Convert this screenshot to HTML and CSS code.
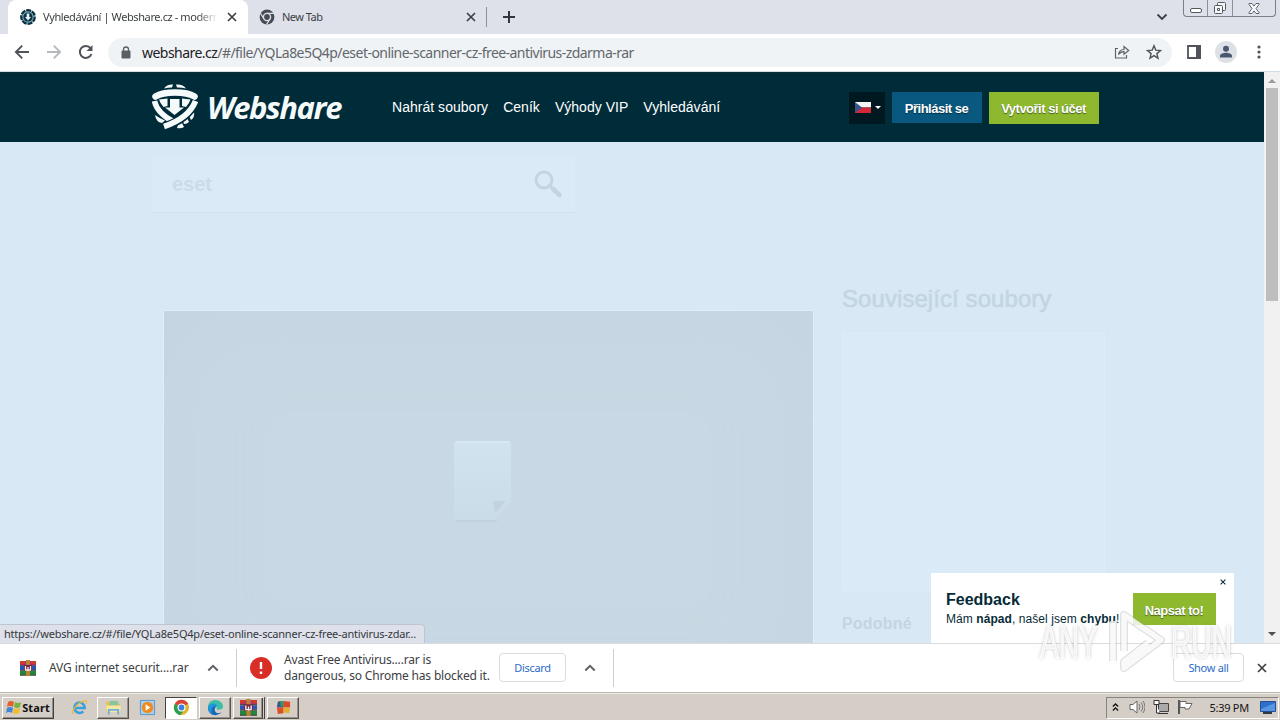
FILE: index.html
```html
<!DOCTYPE html>
<html lang="cs">
<head>
  <meta charset="UTF-8">
  <title>Vyhledávání | Webshare.cz</title>
  <link rel="stylesheet" href="styles.css">
</head>
<body>

<!-- shared icons -->
<svg class="defs" width="0" height="0">
  <symbol id="chrome-mono" viewBox="0 0 16 16">
    <circle cx="8" cy="8" r="7.4" fill="#474b52"/>
    <circle cx="8" cy="8" r="3.6" fill="#474b52" stroke="#dee1e9" stroke-width="1.4"/>
    <path d="M8 4.4h7M4.9 9.8 1.4 4.2M11.1 9.8 7.6 15.4" stroke="#dee1e9" stroke-width="1.2"/>
  </symbol>
  <symbol id="winrar" viewBox="0 0 16 16">
    <path fill="#b32b7d" d="M0 1h16v4H0z"/>
    <path fill="#2a53b5" d="M0 6h16v4H0z"/>
    <path fill="#23863a" d="M0 11h16v4H0z"/>
    <path fill="#cf3b2b" d="M0 1h5v3H0zM11 1h5v3h-5z"/>
    <path stroke="#1d1a20" stroke-width=".8" d="M0 5.4h16M0 10.4h16M0 15.3h16"/>
    <path fill="#b98235" d="M6 0h4v16H6z"/>
    <path fill="#732440" d="M4 5h8v6H4z"/>
    <path fill="none" stroke="#f4eee8" stroke-width="1.3" d="M5.5 6v4h5V6M8 7v4"/>
  </symbol>
  <symbol id="caret-up" viewBox="0 0 12 8">
    <path fill="none" stroke="#5f6368" stroke-width="2" d="M1.3 6.500 6 1.800l4.700 4.700"/>
  </symbol>
  <symbol id="cross" viewBox="0 0 10 10">
    <path fill="none" stroke="currentColor" stroke-width="1.7" d="m1 1 8 8M9 1 1 9"/>
  </symbol>
</svg>

<div class="tabstrip">
  <div class="tab active">
    <svg class="favicon" viewBox="0 0 16 16">
      <circle cx="8" cy="8" r="6.8" fill="#78a7b7" stroke="#0b2f40" stroke-width="2.2" stroke-dasharray="5 1"/>
      <circle cx="8" cy="8" r="4.6" fill="#0b3346"/>
      <path fill="#e8f6fa" d="M6.700 4.500h2.600V8H11l-3 3.400L5 8h1.700z"/>
    </svg>
    <span class="tab-title fade">Vyhledávání | Webshare.cz - modern</span>
    <svg class="tab-close"><use href="#cross"/></svg>
  </div>
  <div class="tab second-tab">
    <svg class="favicon"><use href="#chrome-mono"/></svg>
    <span class="tab-title">New Tab</span>
    <svg class="tab-close"><use href="#cross"/></svg>
  </div>
  <span class="tab-sep"></span>
  <svg class="plus" viewBox="0 0 12 12"><path d="M6 0v12M0 6h12" stroke="#33373c" stroke-width="2"/></svg>
  <svg class="tab-search" viewBox="0 0 12 8"><path d="m1.500 1.500 4.500 4.500 4.500-4.500" fill="none" stroke="#3c4043" stroke-width="1.8"/></svg>
  <div class="win-buttons">
    <span class="win-btn"><svg width="12" height="5"><rect x=".5" y=".5" width="11" height="4" rx="1.5" fill="#fff" stroke="#54585f"/></svg></span>
    <span class="win-btn"><svg width="14" height="14"><g fill="#f5f6f8" stroke="#54585f"><rect x="4.500" y="1.500" width="8" height="8" rx="1"/><rect x="1.500" y="4.500" width="8" height="8" rx="1"/><path d="M4.500 7.500h2v2h-2z"/></g></svg></span>
    <span class="win-btn wide"><svg width="12" height="11" viewBox="0 0 12 11"><path d="M1 .5h3l2 2.600L8 .5h3v1L8 5.500l3 4v1H8L6 7.900l-2 2.600H1v-1l3-4-3-4z" fill="#f8f8fa" stroke="#54585f" stroke-width=".9"/></svg></span>
  </div>
</div>

<div class="toolbar">
  <svg class="nav" viewBox="0 0 16 16"><path d="M15 8H2M8.200 1.700 1.900 8l6.300 6.300" fill="none" stroke="#505459" stroke-width="1.900"/></svg>
  <svg class="nav" viewBox="0 0 16 16"><path d="M1 8h13M7.800 1.700 14.100 8l-6.300 6.300" fill="none" stroke="#b7babd" stroke-width="1.900"/></svg>
  <svg class="nav" viewBox="0 0 16 16"><path d="M13.500 10A6 6 0 1 1 12.600 4.200" fill="none" stroke="#505459" stroke-width="2"/><path d="M14.500 1v6h-6z" fill="#505459"/></svg>
  <div class="omnibox">
    <svg class="lock" viewBox="0 0 10 13"><rect x=".5" y="4.500" width="9" height="8" rx="1" fill="#5b5f64"/><path d="M2.500 5V3.500a2.500 2.500 0 0 1 5 0V5" fill="none" stroke="#5b5f64" stroke-width="1.300"/></svg>
    <span class="url"><b>webshare.cz</b>/#/file/YQLa8e5Q4p/eset-online-scanner-cz-free-antivirus-zdarma-rar</span>
    <svg class="share" viewBox="0 0 16 14"><path d="M4 3.500H1.500v9.500h11V10M4.500 9.500C5 6 7.500 4.600 10 4.500V1.500L14.700 5.500 10 9.300V6.700C8 6.700 6 7.500 4.500 9.500z" fill="none" stroke="#5f6368" stroke-width="1.200"/></svg>
    <svg class="star" viewBox="0 0 16 16"><path d="m8 1.700 1.800 4.400 4.700.4-3.600 3.100 1.100 4.600L8 11.700l-4 2.500 1.100-4.600L1.500 6.500l4.700-.4z" fill="none" stroke="#505459" stroke-width="1.400"/></svg>
  </div>
  <svg class="panel" viewBox="0 0 14 14"><path d="M1 1h12v12H1z" fill="#fff" stroke="#505459" stroke-width="1.800"/><path d="M9 0h5v14H9z" fill="#505459"/></svg>
  <svg class="avatar" viewBox="0 0 22 22"><circle cx="11" cy="11" r="11" fill="#dde1e6"/><circle cx="11" cy="7.800" r="3" fill="#4b5872"/><path d="M5 16.500v-1.700c0-2 3.500-3 6-3s6 1 6 3v1.700z" fill="#4b5872"/></svg>
  <svg class="dots" viewBox="0 0 4 14"><g fill="#505459"><circle cx="2" cy="2" r="1.600"/><circle cx="2" cy="7" r="1.600"/><circle cx="2" cy="12" r="1.600"/></g></svg>
</div>

<div class="viewport">
  <div class="site">
    <header class="site-header">
      <div class="logo">
        <svg class="logo-mark" viewBox="0 0 46 46">
          <g fill="#f5fafb">
            <path d="M12 4.500Q15 0 21 .5L20 3.500Q16 3.500 12 4.500zM24 .5q7-.5 10 4-5-1.300-9-1z"/>
            <path d="M3 31q1 7 7 8l3-2.500Q7 34 3 31zM37 32l5-4q1 5-3 8zM31 37l4-3 2 4q-2 2-5 2zM26 41l4-2 2 4q-3 2-7 1z"/>
            <path d="M18 15h9.500v8.500H32L22.500 31 13 23.500h5z"/>
            <path d="M7 15.500 15.500 14.500V22l-4 1Q8 19 7 15.500zM30 14.500l8.500 1Q37.500 19 34 23l-4-1z"/>
          </g>
          <path d="M3.500 12.500Q10 8.500 23 8.500t19.500 4" fill="none" stroke="#f5fafb" stroke-width="6.500" stroke-linecap="round"/>
          <path d="M3 18Q6 29 22 37" fill="none" stroke="#002b39" stroke-width="8"/>
          <path d="M2.500 17Q5 29 22 38" fill="none" stroke="#f5fafb" stroke-width="5.500"/>
          <path d="M43 18Q37 34 14 42" fill="none" stroke="#002b39" stroke-width="8.500"/>
          <path d="M43.500 17Q37 34 12 42.500" fill="none" stroke="#f5fafb" stroke-width="5.800"/>
        </svg>
        <span class="logo-text">Webshare</span>
      </div>
      <nav class="menu">
        <a>Nahrát soubory</a>
        <a>Ceník</a>
        <a>Výhody VIP</a>
        <a>Vyhledávání</a>
      </nav>
      <div class="account">
        <span class="lang">
          <svg width="16" height="11"><path fill="#f5f5f5" d="M0 0h16v5.500H0z"/><path fill="#d32835" d="M0 5.500h16V11H0z"/><path fill="#37558d" d="m0 0 7 5.500L0 11z"/></svg>
          <i class="arrow"></i>
        </span>
        <a class="btn login">Přihlásit se</a>
        <a class="btn green">Vytvořit si účet</a>
      </div>
    </header>

    <main class="content">
      <div class="search">
        <span>eset</span>
        <svg width="30" height="30" viewBox="0 0 30 30"><circle cx="11" cy="11" r="8" fill="none" stroke="#c3d5e1" stroke-width="3"/><path d="m17 17 3 3" stroke="#c3d5e1" stroke-width="3"/><path d="m20 20 6.500 6" stroke="#c3d5e1" stroke-width="4.500" stroke-linecap="round"/></svg>
      </div>
      <div class="columns">
        <div class="preview">
          <svg width="62" height="84" viewBox="0 0 62 84">
            <defs><linearGradient id="paper" x2="0" y2="1"><stop stop-color="#d2e3f0"/><stop offset="1" stop-color="#cbdce9"/></linearGradient></defs>
            <path d="M4 81h41" stroke="#c1d2df" stroke-width="2"/>
            <path d="M5 1h52q2 0 2 2v59L43 80H5q-3 0-3-3V3q0-2 3-2z" fill="url(#paper)"/>
            <path d="M41 61h13L43 73z" fill="#c2d3e0"/>
            <path d="M4 2h53" stroke="#d7e8f4" stroke-width="2"/>
          </svg>
        </div>
        <aside class="related">
          <h2>Související soubory</h2>
          <div class="related-box"></div>
          <h3>Podobné</h3>
        </aside>
      </div>
    </main>

    <div class="feedback">
      <div class="feedback-text">
        <strong>Feedback</strong>
        <p>Mám <b>nápad</b>, našel jsem <b>chybu</b>!</p>
      </div>
      <a class="btn green">Napsat to!</a>
      <svg class="feedback-close" viewBox="0 0 10 10"><use href="#cross"/></svg>
    </div>
    <div class="status">https://webshare.cz/#/file/YQLa8e5Q4p/eset-online-scanner-cz-free-antivirus-zdar...</div>
  </div>
  <div class="scrollbar">
    <i class="sb-up"></i>
    <span class="thumb"></span>
    <i class="sb-down"></i>
  </div>
</div>

<div class="shelf">
  <div class="download first">
    <svg class="rar"><use href="#winrar"/></svg>
    <span class="file">AVG internet securit....rar</span>
    <svg class="caret"><use href="#caret-up"/></svg>
  </div>
  <div class="download second">
    <svg class="alert" viewBox="0 0 22 22"><circle cx="11" cy="11" r="11" fill="#d92d27"/><path d="M11 5v7M11 14.500V17" stroke="#fff" stroke-width="2.400"/></svg>
    <p class="warning">Avast Free Antivirus....rar is<br>dangerous, so Chrome has blocked it.</p>
    <a class="outline discard">Discard</a>
    <svg class="caret"><use href="#caret-up"/></svg>
  </div>
  <a class="outline show-all">Show all</a>
  <svg class="shelf-close"><use href="#cross"/></svg>
</div>

<div class="taskbar">
  <div class="start">
    <svg width="16" height="15" viewBox="0 0 16 15"><path d="M2 2q3-2 6 0L7 7Q4 5 1 7z" fill="#e6602b"/><path d="M9 2q3 2 6 0l-1 5q-3 2-6 0z" fill="#73b53e"/><path d="M1 8q3-2 6 0l-1 5q-3-2-6 0z" fill="#3f86d4"/><path d="M8 8q3 2 6 0l-1 5q-3 2-6 0z" fill="#f3bd29"/></svg>
    <span>Start</span>
  </div>
  <span class="task flat">
    <svg viewBox="0 0 18 18"><path d="M4 9.500h10.500A5.500 5.500 0 1 0 13 13" fill="none" stroke="#3a9fdc" stroke-width="2.700"/><path d="M3 15C-2 16 6 4 14 2c3-1 3 1 2 3" fill="none" stroke="#e9b93b" stroke-width="1.300"/></svg>
  </span>
  <span class="task">
    <svg viewBox="0 0 18 18"><path d="M1 3h6l1 2h8v9H1z" fill="#e3c15c"/><path d="M5 2h9v5H5z" fill="#8bc59c"/><path d="M1 7h16l-1 7H2z" fill="#f8e6a3"/><path d="M4 16.500v-5h10v5" fill="none" stroke="#6fb0da" stroke-width="2"/></svg>
  </span>
  <span class="task flat">
    <svg viewBox="0 0 18 18"><path d="M1.500 1.500h15v15h-15z" fill="#a8cee9" stroke="#4f98cf"/><circle cx="9" cy="9" r="6" fill="#f08a1d"/><path d="m7 5.500 5 3.500-5 3.500z" fill="#fff"/></svg>
  </span>
  <span class="task pressed">
    <svg viewBox="0 0 18 18"><circle cx="9" cy="9" r="8" fill="#e0b629"/><path d="M9 9 2 5a8 8 0 0 1 14 0z" fill="#da4235"/><path d="M9 9 2 5a8 8 0 0 0 6 12l4-6z" fill="#2e9d4d"/><circle cx="9" cy="9" r="3.700" fill="#3f7fe0" stroke="#fff" stroke-width="1.300"/></svg>
  </span>
  <span class="task">
    <svg viewBox="0 0 18 18"><path d="M1 9C1 3 5 1 9 1s8 3 8 7c0 3-4 4-7 3 1-2 1-4-3-5-3 0-5 1-6 3z" fill="#3cbfa6"/><path d="M1 9c2-4 8-4 9-1-3 2-2 6 1 7 2 0 4 0 5-2-3 6-15 6-15-4z" fill="#1668b8"/><path d="M1 9c1-5 9-6 10-1-5-2-8 3-5 8-3-1-5-4-5-7z" fill="#1f95dc"/></svg>
  </span>
  <span class="task double"><svg viewBox="0 0 16 16"><use href="#winrar"/></svg></span>
  <span class="task">
    <svg viewBox="0 0 18 18"><path d="M3 3q3-2 6 0v6H2z" fill="#38558f"/><path d="M9 2l7 1v6H9z" fill="#da4a29"/><path d="M2 9h7v6l-6 1z" fill="#db5127"/><path d="M9 9h7l-1 6-6-1z" fill="#e5ae32"/><path d="M5 2h4v6H6z" fill="#36945f"/></svg>
  </span>
  <div class="tray">
    <svg class="tray-up" viewBox="0 0 8 10"><path d="m1 4.500 3-3 3 3M1 9l3-3 3 3" fill="none" stroke="#111" stroke-width="1.500"/></svg>
    <svg class="sound" viewBox="0 0 16 16"><path d="M1 5.500h3L8 2v12l-4-3.500H1z" fill="#fff" stroke="#666"/><path d="M10 5q2 3 0 6M12 3.500q3.500 4.500 0 9M14 2q4 6 0 12" fill="none" stroke="#777"/></svg>
    <svg class="net" viewBox="0 0 16 16"><path d="M5.500 4.500h10v8h-10z" fill="#aaa" stroke="#444"/><path d="M5 14.500h10" stroke="#333"/><path d="M1 1.500h5v4H1zM3.500 6v8H7" fill="#fff" stroke="#333"/></svg>
    <svg class="flag" viewBox="0 0 16 16"><path d="M2 1v14" stroke="#555" stroke-width="2"/><path d="M3 2.500h6v2h6l-3 5.500H8V8.500H3z" fill="#fff" stroke="#666"/></svg>
    <span class="clock">5:39 PM</span>
    <svg class="desk" viewBox="0 0 16 13"><path d="M.5.500h15v10H.5z" fill="#2d6fc9" stroke="#234e91"/><path d="M1 8 15 2v8H1z" fill="#5896e4"/><path d="M3 12h9" stroke="#2e3947" stroke-width="2"/></svg>
  </div>
</div>

<div class="watermark">
  <span>ANY</span>
  <svg width="62" height="66" viewBox="0 0 62 66"><g fill="none" stroke-linejoin="round"><path d="M7 12v40M18 42V6l37 25-37 28v-6l24-19" stroke="#999" stroke-opacity=".3" stroke-width="8"/><path d="M7 12v40M18 42V6l37 25-37 28v-6l24-19" stroke="#fff" stroke-opacity=".8" stroke-width="5.500"/></g></svg>
  <span>RUN</span>
</div>

</body>
</html>
```
FILE: styles.css
```css
* {
  box-sizing: border-box;
}
body {
  margin: 0;
  width: 1280px;
  height: 720px;
  overflow: hidden;
  display: flex;
  flex-direction: column;
  position: relative;
  font-family: "Noto Sans", sans-serif;
  font-size: 11px;
  color: #3c4043;
  background: #fff;
}
svg {
  display: block;
  flex: none;
}
.defs {
  position: absolute;
}
span, a {
  white-space: nowrap;
}

/* tabs */
.tabstrip {
  height: 34px;
  flex: none;
  display: flex;
  align-items: center;
  background: #dee1e9;
}
.tab {
  width: 239px;
  height: 34px;
  display: flex;
  align-items: center;
  padding: 0 10px 0 12px;
}
.tab.active {
  margin-left: 8px;
  width: 240px;
  background: #fff;
  border-radius: 8px 8px 0 0;
}
.second-tab {
  width: 238px;
  padding-left: 11px;
  padding-right: 9px;
}
.favicon {
  width: 16px;
  height: 16px;
}
.tab-title {
  flex: 1;
  margin-left: 7px;
  padding-bottom: 1px;
  overflow: hidden;
  font-size: 11px;
  letter-spacing: -0.5px;
}
.fade {
  margin-right: 9px;
  letter-spacing: -0.4px;
  -webkit-mask-image: linear-gradient(to right, #000 88%, transparent);
  mask-image: linear-gradient(to right, #000 88%, transparent);
}
.tab-close {
  width: 10px;
  height: 10px;
  margin-right: 1px;
}
.tab-sep {
  width: 1px;
  height: 20px;
  background: #8d929b;
}
.plus {
  width: 12px;
  height: 12px;
  margin-left: 16px;
}
.tab-search {
  width: 12px;
  height: 8px;
  margin-left: auto;
}
.win-buttons {
  display: flex;
  align-self: flex-start;
  height: 17px;
  margin: 0 4px 0 15px;
  border: 1px solid #7b7f87;
  border-top: 0;
  border-radius: 0 0 4px 4px;
}
.win-btn {
  width: 25px;
  display: flex;
  align-items: center;
  justify-content: center;
  border-right: 1px solid #8d9199;
}
.win-btn:first-child {
  width: 24px;
  padding-top: 4px;
}
.win-btn.wide {
  width: 42px;
  border: 0;
}

/* toolbar */
.toolbar {
  height: 38px;
  flex: none;
  display: flex;
  align-items: center;
  padding: 0 19px 1px 14px;
  border-bottom: 1px solid #d3dce2;
}
.nav {
  width: 16px;
  height: 16px;
  margin-right: 16px;
}
.omnibox {
  width: 1064px;
  height: 29px;
  margin-left: -2px;
  display: flex;
  align-items: center;
  border-radius: 15px;
  background: #f0f3f5;
  padding: 0 10px 0 13px;
}
.lock {
  width: 10px;
  height: 13px;
}
.url {
  margin-left: 11px;
  font-size: 14px;
  letter-spacing: -0.54px;
  color: #62676c;
}
.url b {
  font-weight: normal;
  color: #202124;
}
.share {
  width: 16px;
  height: 14px;
  margin-left: auto;
}
.star {
  width: 16px;
  height: 16px;
  margin-left: 16px;
}
.panel {
  width: 14px;
  height: 14px;
  margin-left: 15px;
}
.avatar {
  width: 22px;
  height: 22px;
  margin-left: 14px;
}
.dots {
  width: 4px;
  height: 14px;
  margin-left: auto;
}

/* page */
.viewport {
  height: 571px;
  flex: none;
  display: flex;
}
.site {
  width: 1264px;
  position: relative;
  overflow: hidden;
  background: #d8e9f5;
  font-family: "Liberation Sans", Arial, sans-serif;
}
.site-header {
  height: 70px;
  padding: 0 165px 0 152px;
  display: flex;
  align-items: center;
  background: #002b39;
  border-top: 1px solid #092e35;
}
.logo {
  width: 240px;
  padding-bottom: 1px;
  display: flex;
  align-items: center;
}
.logo-mark {
  width: 46px;
  height: 46px;
}
.logo-text {
  margin-left: 9px;
  font: italic bold 31px/40px "Open Sans", sans-serif;
  letter-spacing: -1.45px;
  color: #f5fafb;
}
.menu {
  display: flex;
  gap: 15px;
  padding-bottom: 1px;
  font-size: 14px;
  letter-spacing: 0.03px;
  color: #fff;
}
.account {
  margin-left: auto;
  display: flex;
}
.lang {
  width: 36px;
  height: 32px;
  margin-right: 7px;
  display: flex;
  align-items: center;
  justify-content: center;
  gap: 4px;
  padding-left: 1px;
  background: #001820;
}
.arrow {
  border: 3px solid transparent;
  border-top-color: #fff;
  border-bottom: 0;
}
.btn {
  height: 32px;
  display: flex;
  align-items: center;
  justify-content: center;
  padding: 1px 1px 0 0;
  font-size: 13px;
  font-weight: bold;
  letter-spacing: -0.5px;
  color: #fff;
  text-shadow: 0 1px 1px rgba(0,0,0,0.5);
}
.login {
  width: 90px;
  height: 31px;
  margin-right: 7px;
  padding-top: 2px;
  background: #085880;
}
.green {
  width: 110px;
  background: #8eb92f;
}
.content {
  padding: 13px 0 0 152px;
}
.search {
  width: 423px;
  height: 58px;
  padding: 1px 12px 0 20px;
  display: flex;
  align-items: center;
  justify-content: space-between;
  background: #dbeaf7;
  border-bottom: 1px solid #d0e2ef;
  font-size: 20px;
  font-weight: bold;
  color: #cbdce8;
}
.columns {
  display: flex;
  align-items: flex-start;
  gap: 28px;
  padding: 71px 0 0 11px;
}
.preview {
  width: 651px;
  height: 400px;
  margin-top: 26px;
  padding: 129px 0 0 288px;
  border: 1px solid #dfeefa;
  background: #c8d8e4;
  box-shadow: inset 0 0 100px #c4d4e0;
}
.related {
  width: 263px;
}
.related h2 {
  margin: 0;
  font-size: 24px;
  line-height: 30px;
  letter-spacing: 0.07px;
  color: #c3d5e2;
  font-weight: normal;
  -webkit-text-stroke: 0.6px #c3d5e2;
  white-space: nowrap;
}
.related-box {
  height: 259px;
  margin-top: 18px;
  background: #daeaf7;
  border: 1px solid #dcecf8;
}
.related h3 {
  margin: 24px 0 0;
  font-size: 16px;
  letter-spacing: 0.2px;
  color: #c3d5e2;
}
.feedback {
  position: absolute;
  left: 931px;
  bottom: 0;
  width: 303px;
  height: 70px;
  padding: 17px 18px 0 15px;
  display: flex;
  justify-content: space-between;
  background: #fff;
  color: #062b37;
}
.feedback strong {
  display: block;
  font-size: 16px;
  line-height: 20px;
}
.feedback p {
  margin: 1px 0 0;
  font-size: 12px;
  line-height: 16px;
  letter-spacing: 0.07px;
  white-space: nowrap;
}
.feedback .btn {
  width: 83px;
  margin-top: 3px;
  padding-top: 3px;
  letter-spacing: -0.5px;
}
.feedback-close {
  position: absolute;
  top: 6px;
  right: 8px;
  width: 6px;
  height: 6px;
}
.status {
  position: absolute;
  left: 0;
  bottom: 0;
  width: 425px;
  height: 19px;
  padding-left: 4px;
  font: 11px/18px "Noto Sans", sans-serif;
  letter-spacing: -0.21px;
  white-space: nowrap;
  background: #dee1e9;
  border: 1px solid #bdc6d0;
  border-width: 1px 1px 0 0;
  border-radius: 0 4px 0 0;
  color: #34383d;
}
.scrollbar {
  width: 16px;
  padding: 7px 2px;
  display: flex;
  flex-direction: column;
  align-items: center;
  background: #f1f1f1;
}
.sb-up, .sb-down {
  border: 4px solid transparent;
}
.sb-up {
  border-top: 0;
  border-bottom: 4px solid #999;
}
.sb-down {
  margin-top: auto;
  border-bottom: 0;
  border-top: 4px solid #505050;
}
.thumb {
  width: 12px;
  height: 213px;
  margin-top: 5px;
  background: #bebebe;
}

/* downloads */
.shelf {
  height: 50px;
  flex: none;
  display: flex;
  align-items: center;
  border-top: 1px solid #dadce0;
  border-bottom: 1px solid #bbb8b3;
  padding: 0 13px 1px 0;
}
.download {
  height: 38px;
  display: flex;
  align-items: center;
  border-right: 1px solid #ccced1;
}
.first {
  width: 237px;
  padding: 0 17px 0 20px;
}
.second {
  width: 377px;
  padding: 0 17px 0 13px;
}
.rar {
  width: 16px;
  height: 16px;
}
.file {
  margin-left: 13px;
  font-size: 12px;
  letter-spacing: -0.08px;
}
.caret {
  width: 12px;
  height: 8px;
  margin-left: auto;
}
.alert {
  width: 22px;
  height: 22px;
}
.warning {
  width: 206px;
  margin: 0 0 0 12px;
  font-size: 12px;
  letter-spacing: -0.18px;
  line-height: 16px;
  white-space: nowrap;
}
.outline {
  height: 29px;
  padding-bottom: 1px;
  border: 1px solid #dadce0;
  border-radius: 4px;
  display: flex;
  align-items: center;
  justify-content: center;
  letter-spacing: -0.3px;
  color: #2d6bc9;
}
.discard {
  width: 67px;
  margin-left: 9px;
}
.show-all {
  width: 71px;
  margin-left: auto;
}
.shelf-close {
  width: 10px;
  height: 10px;
  margin-left: 13px;
}

/* taskbar */
.taskbar {
  height: 27px;
  display: flex;
  align-items: center;
  background: #d5cec7;
  border-top: 1px solid #eeebe7;
  padding: 1px 1px 0 2px;
}
.start {
  width: 52px;
  height: 22px;
  margin-right: 9px;
  display: flex;
  align-items: center;
  justify-content: center;
  padding-bottom: 1px;
  border: 1px solid;
  border-color: #fff #44413e #44413e #fff;
  box-shadow: inset -1px -1px #928d87;
  font-size: 11px;
  font-weight: bold;
  letter-spacing: 0.1px;
  color: #111;
}
.task {
  width: 32px;
  height: 22px;
  margin-right: 2px;
  display: flex;
  align-items: center;
  justify-content: center;
  border: 1px solid;
  border-color: #fff #55514d #55514d #fff;
  box-shadow: inset -1px -1px #96918b;
}
.task svg {
  width: 17px;
  height: 17px;
}
.flat {
  border-color: transparent;
  box-shadow: none;
}
.pressed {
  background: #fff;
  border-color: #44413e #fff #fff #44413e;
  box-shadow: none;
}
.double {
  border-right: 3px double #45413e;
}
.tray {
  margin-left: auto;
  width: 173px;
  height: 22px;
  padding: 0 2px 1px 5px;
  display: flex;
  align-items: center;
  border: 1px solid;
  border-color: #88837d #fff #fff #88837d;
  color: #151515;
}
.tray-up {
  width: 7px;
  height: 10px;
}
.sound, .net, .flag {
  width: 16px;
  height: 16px;
  margin-left: 8px;
}
.sound {
  margin-left: 10px;
}
.clock {
  margin-left: auto;
  letter-spacing: -0.25px;
}
.desk {
  width: 16px;
  height: 13px;
  margin-left: 11px;
}

/* overlay mark */
.watermark {
  position: absolute;
  left: 1040px;
  top: 609px;
  width: 196px;
  height: 66px;
  display: flex;
  align-items: center;
  color: rgba(255,255,255,0.8);
  font: 46px/66px "Liberation Sans", sans-serif;
  -webkit-text-stroke: 1.5px rgba(255,255,255,0.8);
  text-shadow: 0 0 4px rgba(120,120,120,0.65);
}
.watermark span {
  display: block;
  width: 62px;
  transform: scaleX(0.61);
  transform-origin: left;
}
.watermark svg {
  margin: 0 3px 0 4px;
}
```
